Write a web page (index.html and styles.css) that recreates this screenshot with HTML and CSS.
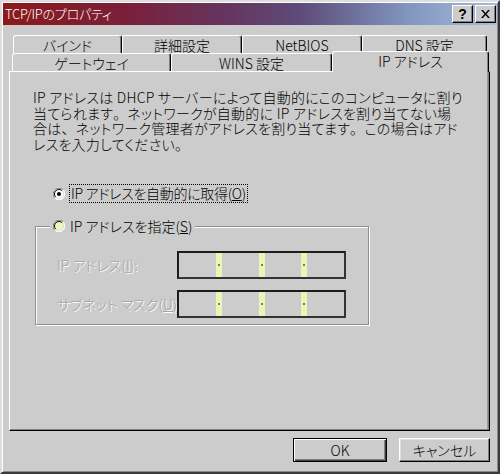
FILE: index.html
```html
<!DOCTYPE html>
<html lang="ja">
<head>
<meta charset="utf-8">
<title>TCP/IPのプロパティ</title>
<link rel="stylesheet" href="styles.css">
</head>
<body>
<div class="window">
  <div class="titlebar">
    <span class="title">TCP/IPのプロパティ</span>
    <div class="tbtns">
      <button class="tbtn help">?</button>
      <button class="tbtn close"><svg width="9" height="8" viewBox="0 0 9 8"><path d="M0 0h2l2.5 3 2.5-3h2L5.5 4 9 8H7L4.5 5 2 8H0l3.5-4z" fill="#000"/></svg></button>
    </div>
  </div>
  <div class="body">
    <div class="tabrow row1">
      <div class="tab t-bind">バインド</div>
      <div class="tab t-detail">詳細設定</div>
      <div class="tab t-netbios">NetBIOS</div>
      <div class="tab t-dns">DNS 設定</div>
    </div>
    <div class="tabrow row2">
      <div class="tab t-gw">ゲートウェイ</div>
      <div class="tab t-wins">WINS 設定</div>
      <div class="tab t-ip active">IP アドレス</div>
    </div>
    <div class="panel">
      <p class="desc">IP アドレスは DHCP サーバーによって自動的にこのコンピュータに割り<br>当てられます<span class="fw">。</span>ネットワークが自動的に IP アドレスを割り当てない場<br>合は<span class="fw">、</span>ネットワーク管理者がアドレスを割り当てます<span class="fw">。</span>この場合はアド<br>レスを入力してください<span class="fw">。</span></p>
      <div class="radio r-auto">
        <svg class="rb" width="12" height="12" viewBox="0 0 12 12"><circle cx="6" cy="6" r="5.5" fill="#fff"/><path d="M1.76 10.24A6 6 0 0 1 10.24 1.76" stroke="#808080" fill="none"/><path d="M10.24 1.76A6 6 0 0 1 1.76 10.24" stroke="#fff" fill="none"/><path d="M2.8 9.2A4.5 4.5 0 0 1 9.2 2.8" stroke="#000" fill="none"/><path d="M9.2 2.8A4.5 4.5 0 0 1 2.8 9.2" stroke="#dfdfdf" fill="none"/><circle cx="6" cy="6" r="2" fill="#000"/></svg>
        <span class="focus">IP アドレスを自動的に取得(<u>O</u>)</span>
      </div>
      <fieldset class="group">
        <legend class="radio">
          <svg class="rb" width="12" height="12" viewBox="0 0 12 12"><circle cx="6" cy="6" r="5.5" fill="#f1f6bd"/><path d="M1.76 10.24A6 6 0 0 1 10.24 1.76" stroke="#808080" fill="none"/><path d="M10.24 1.76A6 6 0 0 1 1.76 10.24" stroke="#fff" fill="none"/><path d="M2.8 9.2A4.5 4.5 0 0 1 9.2 2.8" stroke="#000" fill="none"/><path d="M9.2 2.8A4.5 4.5 0 0 1 2.8 9.2" stroke="#dfdfdf" fill="none"/></svg>
          <span class="lbl">IP アドレスを指定(<u>S</u>)</span>
        </legend>
        <div class="field-row">
          <span class="dlabel">IP アドレス(<u>I</u>):</span>
          <div class="ipbox"><span class="seg"></span><span class="dot"></span><span class="seg"></span><span class="dot"></span><span class="seg"></span><span class="dot"></span><span class="seg"></span></div>
        </div>
        <div class="field-row">
          <span class="dlabel">サブネット マスク(<u>U</u>):</span>
          <div class="ipbox"><span class="seg"></span><span class="dot"></span><span class="seg"></span><span class="dot"></span><span class="seg"></span><span class="dot"></span><span class="seg"></span></div>
        </div>
      </fieldset>
    </div>
    <div class="buttons">
      <button class="btn default">OK</button>
      <button class="btn cancel">キャンセル</button>
    </div>
  </div>
</div>
</body>
</html>
```
FILE: styles.css
```css
* { box-sizing: border-box; }
html, body { margin: 0; padding: 0; background: #cccccc; }
body {
  font-family: "Noto Sans CJK JP", "Liberation Sans", sans-serif;
  font-size: 14px;
  font-weight: 300;
  font-feature-settings: "palt";
  color: #000;
}
.window {
  width: 500px;
  height: 474px;
  background: #cccccc;
  border: 2px solid;
  border-color: #dedede #3a3a3a #3a3a3a #dedede;
  box-shadow: inset 1px 1px 0 #ffffff, inset -1px -1px 0 #8a8a8a;
  padding: 1px;
  display: flex;
  flex-direction: column;
}
.titlebar {
  height: 22px;
  background: linear-gradient(to right, #8a1a1a 0%, #7a1f3a 25%, #65355e 45%, #5e4a78 60%, #8196c0 82%, #a8bcdc 100%);
  display: flex;
  align-items: center;
  justify-content: space-between;
  padding: 0 1px 0 2px;
}
.title {
  color: #fff;
  font-size: 13px;
  letter-spacing: -0.2px;
  line-height: 22px;
  white-space: nowrap;
}
.tbtns { display: flex; gap: 2px; }
.tbtn {
  width: 21px;
  height: 18px;
  padding: 0;
  margin: 0;
  background: #cccccc;
  border: 1px solid;
  border-color: #fff #000 #000 #fff;
  box-shadow: inset -1px -1px 0 #808080;
  display: flex;
  align-items: center;
  justify-content: center;
  font-family: "Liberation Sans", sans-serif;
  font-weight: bold;
  font-size: 14px;
  line-height: 1;
  color: #000;
}
.body {
  flex: 1;
  display: flex;
  flex-direction: column;
  padding: 10px 7px 0 6px;
}
.tabrow {
  display: flex;
  height: 18px;
  align-items: flex-end;
}
.row1 { margin-left: 4px; }
.row2 { margin-left: 3px; }
.tab {
  height: 18px;
  border-top: 1px solid #fff;
  border-left: 1px solid #fff;
  border-right: 1px solid #000;
  box-shadow: inset -1px 0 0 #808080;
  border-radius: 3px 3px 0 0;
  display: flex;
  align-items: center;
  justify-content: center;
  white-space: nowrap;
  line-height: 1;
  background: #cccccc;
}
.t-bind { width: 109px; }
.t-detail { width: 120px; }
.t-netbios { width: 120px; }
.t-dns { width: 125px; }
.t-gw { width: 159px; }
.t-wins { width: 161px; }
.t-ip {
  width: 157px;
  height: 21px;
  margin-top: -2px;
  margin-bottom: -1px;
  position: relative;
  z-index: 1;
  padding-bottom: 3px;
}
.panel {
  height: 360px;
  border: 1px solid;
  border-color: #fff #000 #000 #fff;
  box-shadow: inset -1px -1px 0 #808080, inset -2px 0 0 #9a9a9a;
  padding: 0;
  display: flex;
  flex-direction: column;
  align-items: flex-start;
}
.desc {
  margin: 18px 0 0 23px;
  line-height: 15.5px;
  letter-spacing: 0.25px;
  white-space: nowrap;
}
.fw { font-feature-settings: normal; }
.radio {
  display: flex;
  align-items: center;
  white-space: nowrap;
}
.rb { flex: none; }
.r-auto {
  margin: 32px 0 0 43px;
  gap: 4px;
}
.focus {
  border: 1px dotted #000;
  padding: 0 1px;
  line-height: 17px;
  letter-spacing: -0.3px;
}
.group {
  margin: 14px 0 0 25px;
  width: 334px;
  padding: 0 0 6px 21px;
  border: 1px solid #8e8e8e;
  box-shadow: inset 1px 1px 0 #fff, 1px 1px 0 #fff;
  display: flex;
  flex-direction: column;
  gap: 11px;
}
.group legend {
  margin-left: -7px;
  padding: 0 3px 0 3px;
  gap: 4px;
  background: #cccccc;
  line-height: 18px;
  margin-bottom: 16px;
}
.lbl { padding-left: 1px; }
.field-row {
  display: flex;
  align-items: center;
  height: 28px;
}
.dlabel {
  width: 120px;
  color: #a3a3a3;
  text-shadow: 1px 1px 0 #fff;
  white-space: nowrap;
}
.ipbox {
  width: 169px;
  height: 28px;
  border: 2px solid #1c1c1c;
  border-right-color: #333;
  border-bottom-color: #333;
  display: flex;
  background: #cccccc;
}
.seg { flex: 1; }
.dot {
  width: 6px;
  background: #eef5b4;
  display: flex;
  align-items: center;
  justify-content: center;
}
.dot::after {
  content: "";
  width: 2px;
  height: 2px;
  background: #7a7a6a;
}
.buttons {
  display: flex;
  justify-content: flex-end;
  gap: 12px;
  margin-top: 7px;
}
.btn {
  height: 24px;
  padding: 0;
  margin: 0;
  background: #cccccc;
  font-family: "Noto Sans CJK JP", "Liberation Sans", sans-serif;
  font-size: 14px;
  font-weight: 300;
  font-feature-settings: "palt";
  color: #000;
  border: 1px solid;
  border-color: #fff #000 #000 #fff;
  box-shadow: inset -1px -1px 0 #808080, inset 1px 1px 0 #e0e0e0;
  line-height: 1;
}
.btn.default {
  width: 94px;
  border-color: #000;
  box-shadow: inset 1px 1px 0 #fff, inset -1px -1px 0 #404040, inset -2px -2px 0 #808080;
}
.btn.cancel { width: 91px; }
```
